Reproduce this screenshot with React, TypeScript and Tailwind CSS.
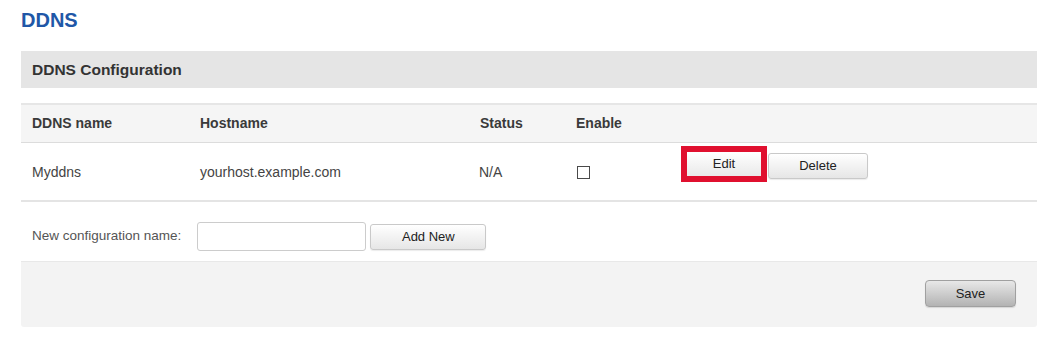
import React from "react";

const font = { fontFamily: '"Liberation Sans", Arial, sans-serif' };

export default function App() {
  return (
    <div className="w-[1056px] h-[344px] bg-white" style={font}>
      <div className="pl-[21px] pr-[19px] pt-[9px]">
        <h1 className="text-[20px] leading-[23px] font-bold text-[#2057a7]">DDNS</h1>

        <div className="mt-[19px] h-[37px] bg-[#e5e5e5] flex items-center pl-[11px] pt-[1px]">
          <span className="text-[15.5px] font-bold text-[#333333]">DDNS Configuration</span>
        </div>

        <div className="mt-[15px]">
          {/* header row */}
          <div className="h-[40px] bg-[#f5f5f5] border-t-2 border-[#e6e6e6] border-b border-b-[#dcdcdc] grid grid-cols-[168px_280px_96px_105px_1fr] items-center pl-[11px] text-[14px] font-bold text-[#3a3a3a]">
            <div>DDNS name</div>
            <div>Hostname</div>
            <div>Status</div>
            <div>Enable</div>
            <div></div>
          </div>

          {/* data row */}
          <div className="h-[59px] border-b-2 border-[#e4e4e4] grid grid-cols-[168px_280px_96px_105px_1fr] items-center pl-[11px] text-[14px] text-[#444444]">
            <div className="pt-[1px]">Myddns</div>
            <div className="pt-[1px]">yourhost.example.com</div>
            <div className="pt-[1px] -ml-[1px]">N/A</div>
            <div className="pt-[2px] pl-[1px]">
              <div className="w-[13px] h-[13px] border border-[#4a4a4a] bg-white" />
            </div>
            <div className="self-start pt-[3px] flex items-start">
              <div className="border-[6px] border-[#e0102f] w-[86px] h-[36px]">
                <div className="w-full h-full bg-gradient-to-b from-[#ffffff] to-[#e9e9e9] flex items-center justify-center text-[13px] text-[#222222]">
                  Edit
                </div>
              </div>
              <button className="ml-[1px] mt-[7px] w-[100px] h-[26px] rounded-[3px] border border-[#c9c9c9] bg-gradient-to-b from-[#ffffff] to-[#e6e6e6] shadow-[0_1px_1px_rgba(0,0,0,0.08)] text-[13px] text-[#222222]">
                Delete
              </button>
            </div>
          </div>

          {/* new config row */}
          <div className="pt-[20px] pb-[10px] pl-[11px] flex items-center">
            <span className="text-[13.5px] text-[#555555]">New configuration name:</span>
            <div className="ml-[16px] w-[169px] h-[29px] rounded-[3px] border border-[#cccccc] bg-white" />
            <button className="ml-[4px] w-[116px] h-[26px] rounded-[3px] border border-[#c9c9c9] bg-gradient-to-b from-[#ffffff] to-[#e6e6e6] shadow-[0_1px_1px_rgba(0,0,0,0.08)] text-[13px] text-[#222222]">
              Add New
            </button>
          </div>

          {/* footer */}
          <div className="h-[66px] bg-[#f3f3f3] border-t border-[#e8e8e8] rounded-b-[3px] flex justify-end items-start pt-[18px] pr-[21px]">
            <button className="w-[91px] h-[27px] rounded-[4px] border border-[#a0a0a0] bg-gradient-to-b from-[#e8e8e8] to-[#b3b3b3] shadow-[0_1px_1px_rgba(0,0,0,0.12)] text-[13px] text-[#222222]">
              Save
            </button>
          </div>
        </div>
      </div>
    </div>
  );
}
